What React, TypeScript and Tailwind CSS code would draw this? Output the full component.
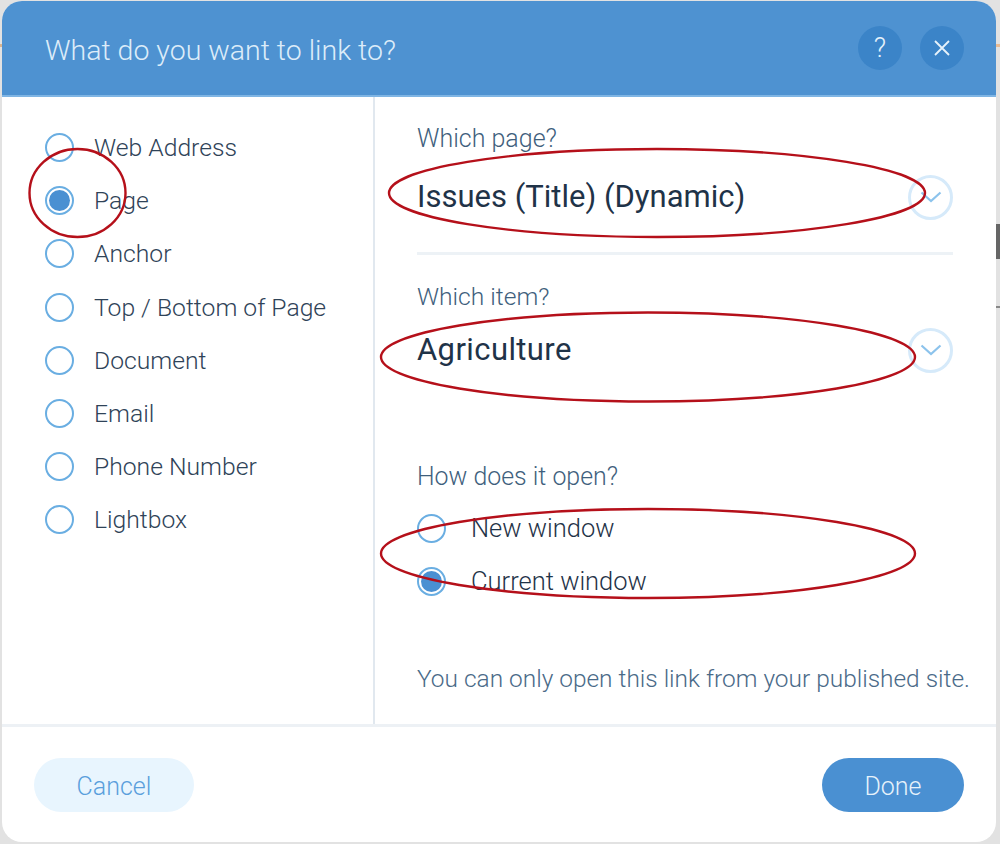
import React from "react";

const font = { fontFamily: '"Roboto", "Liberation Sans", sans-serif' };

function Radio({ checked }: { checked?: boolean }) {
  return (
    <span className="flex h-[29px] w-[29px] shrink-0 items-center justify-center rounded-full border-2 border-[#6aaee2] bg-white">
      {checked && <span className="h-[21px] w-[21px] rounded-full bg-[#4a90d2]" />}
    </span>
  );
}

function Chevron() {
  return (
    <span className="flex h-[45px] w-[45px] items-center justify-center rounded-full border-[3px] border-[#d6eafa]">
      <svg width="22" height="12" viewBox="0 0 22 12" fill="none" stroke="#8cc3ec" strokeWidth="2.2">
        <path d="M1.5 1.5L11 10l9.500-8.500" />
      </svg>
    </span>
  );
}

const options = ["Web Address", "Page", "Anchor", "Top / Bottom of Page", "Document", "Email", "Phone Number", "Lightbox"];

export default function App() {
  return (
    <div className="relative h-[844px] w-[1000px] overflow-hidden bg-[#e2e2e2] pt-px pl-[2px] pr-1 pb-[2px]" style={font}>
      <div className="flex h-[841px] flex-col overflow-hidden rounded-[20px] bg-white">
        <header className="flex h-[96px] shrink-0 items-center justify-between border-b-2 border-[#7fb5e4] bg-[#4e92d1] pl-[43px] pr-[32px]">
          <h1 className="pt-[7px] text-[28.5px] font-light text-[#dcecf9]">What do you want to link to?</h1>
          <div className="flex gap-[18px]">
            <button className="flex h-[44px] w-[44px] items-center justify-center rounded-full bg-[#3b84c8] text-[27px] font-light text-[#e6f2fb]">?</button>
            <button className="flex h-[44px] w-[44px] items-center justify-center rounded-full bg-[#3b84c8]">
              <svg width="18" height="18" viewBox="0 0 18 18" stroke="#e6f2fb" strokeWidth="1.8" fill="none">
                <path d="M2 2l14 14M16 2L2 16" />
              </svg>
            </button>
          </div>
        </header>

        <div className="flex h-[630px] shrink-0 border-b-[3px] border-[#edf1f5]">
          <ul className="flex w-[373px] shrink-0 flex-col border-r-2 border-[#e1e8ef] pt-[24px] pl-[43px]">
            {options.map((o, i) => (
              <li key={o} className="flex h-[53.2px] items-center gap-[20px] text-[24.7px] font-light text-[#2f4358]">
                <Radio checked={i === 1} />
                <span>{o}</span>
              </li>
            ))}
          </ul>
          <div className="flex min-w-0 flex-1 flex-col pt-[24px] pl-[42px] pr-[43px]">
            <p className="h-[36px] text-[25px] leading-[36px] font-light text-[#3f5f7d]">Which page?</p>
            <div className="mt-[10px] flex h-[60px] items-center justify-between">
              <span className="text-[31px] text-[#1f3348]">Issues (Title) (Dynamic)</span>
              <Chevron />
            </div>
            <div className="mt-[25px] h-[3px] bg-[#edf2f6]" />
            <p className="mt-[24px] h-[36px] text-[24.6px] leading-[36px] font-light text-[#3f5f7d]">Which item?</p>
            <div className="mt-[5px] flex h-[60px] items-center justify-between">
              <span className="text-[31px] tracking-[0.4px] text-[#1f3348]">Agriculture</span>
              <Chevron />
            </div>
            <p className="mt-[79px] h-[36px] text-[24.9px] leading-[36px] font-light text-[#3f5f7d]">How does it open?</p>
            <div className="mt-[7px] flex flex-col">
              <div className="flex h-[53px] items-center gap-[25px] text-[25.5px] font-light text-[#1f3348]">
                <Radio />
                <span>New window</span>
              </div>
              <div className="flex h-[53px] items-center gap-[25px] text-[25.5px] font-light text-[#1f3348]">
                <Radio checked />
                <span>Current window</span>
              </div>
            </div>
            <p className="mt-[53px] whitespace-nowrap text-[24.45px] font-light text-[#4a6a88]">You can only open this link from your published site.</p>
          </div>
        </div>

        <footer className="flex flex-1 items-center justify-between pt-px pl-[32px] pr-[32px]">
          <button className="h-[54px] w-[160px] rounded-full bg-[#e8f5fe] pt-[3px] text-[25px] font-light text-[#5a9fdc]">Cancel</button>
          <button className="h-[54px] w-[142px] rounded-full bg-[#4a90d2] pt-[3px] text-[25px] font-light text-[#e6f2fb]">Done</button>
        </footer>
      </div>

      <span className="absolute top-[44px] left-0 h-[3px] w-[2px] bg-[#d9b48f]" />
      <span className="absolute top-[44px] right-0 h-[3px] w-[4px] bg-[#e9bb93]" />
      <span className="absolute top-[224px] right-0 h-[35px] w-[4px] bg-[#666]" />
      <span className="absolute top-[306px] right-0 h-[2px] w-[4px] bg-[#888]" />

      <svg className="pointer-events-none absolute inset-0" width="1000" height="844" fill="none" stroke="#b5101a" strokeWidth="2.4">
        <ellipse cx="77.500" cy="193" rx="48" ry="44" />
        <ellipse cx="657" cy="193" rx="268" ry="44" />
        <ellipse cx="648" cy="357" rx="267" ry="44.5" />
        <ellipse cx="648" cy="553.5" rx="267" ry="44.5" />
      </svg>
    </div>
  );
}
